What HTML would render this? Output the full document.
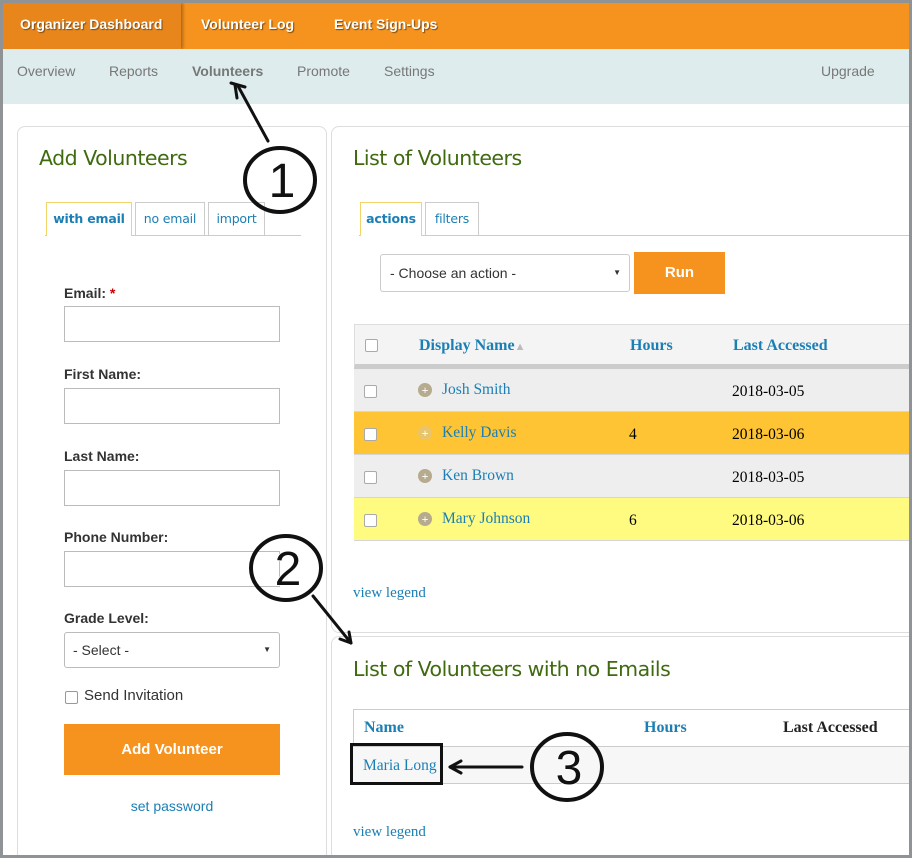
<!DOCTYPE html>
<html><head><meta charset="utf-8"><style>
*{box-sizing:border-box;margin:0;padding:0}
body{width:912px;height:858px;background:#8f9396;position:relative;overflow:hidden;font-family:"Liberation Sans",sans-serif}
.frame{position:absolute;left:3px;top:3px;width:906px;height:852px;background:#fff;overflow:hidden}
.top{position:absolute;left:0;top:0;width:906px;height:46px;background:#f6931e}
.top .t{position:absolute;top:0;height:46px;line-height:42px;color:#fff;font-weight:bold;font-size:14px;text-shadow:1px 1px 1px #7a4a10}
.top .a{left:0;width:178px;background:#e8861b;padding-left:17px;box-shadow:2px 0 3px rgba(0,0,0,.3)}
.sub{position:absolute;left:0;top:46px;width:906px;height:55px;background:#deecee}
.sub span{position:absolute;top:14px;font-size:14px;color:#777}
.panel{position:absolute;background:#fff;border:1px solid #ddd;border-radius:8px}
h2{position:absolute;font-weight:normal;font-size:20.5px;color:#3f6a10;font-family:"DejaVu Sans","Liberation Sans",sans-serif;letter-spacing:-.5px}
.tab{position:absolute;height:34px;border:1px solid #ccc;border-bottom:none;color:#1b7fb5;line-height:32px;text-align:center;font-family:"DejaVu Sans",sans-serif;font-size:12.5px;letter-spacing:-.2px}
.tab.on{border-color:#f2d56a;background:#fff}
label{position:absolute;font-size:14px;font-weight:bold;color:#333}
.in{position:absolute;width:216px;height:36px;border:1px solid #bbb;background:#fff}
.serif{font-family:"Liberation Serif",serif}
.lnk{color:#1b7fb5}
.row{position:absolute;left:22px;width:556px;height:43px;border-bottom:1px solid #d6d6d6}
.cb{position:absolute;left:10px;width:13px;height:13px;border:1px solid #aaa;border-radius:2px;background:#fff}
.plus{position:absolute;left:64px;width:14px;height:14px;border-radius:50%;background:#b6ab8e;color:#fff;font-size:12px;line-height:14px;text-align:center;font-weight:bold}
.row .n{position:absolute;left:88px;font-size:15.5px}
.row .d{position:absolute;left:378px;font-size:15.5px}
.row .h{position:absolute;left:275px;font-size:15.5px}
</style></head><body><div class="frame">
<div class="top"><div class="t a">Organizer Dashboard</div><div class="t" style="left:198px">Volunteer Log</div><div class="t" style="left:331px">Event Sign-Ups</div></div>
<div class="sub"><span style="left:14px">Overview</span><span style="left:106px">Reports</span><span style="left:189px;font-weight:bold">Volunteers</span><span style="left:294px">Promote</span><span style="left:381px">Settings</span><span style="left:818px">Upgrade</span></div>

<div class="panel" style="left:14px;top:123px;width:310px;height:740px">
<h2 style="left:21px;top:19px">Add Volunteers</h2>
<div style="position:absolute;left:27px;top:108px;width:256px;border-top:1px solid #ccc"></div>
<div class="tab on" style="left:28px;top:75px;width:86px;font-weight:bold">with email</div>
<div class="tab" style="left:117px;top:75px;width:70px">no email</div>
<div class="tab" style="left:190px;top:75px;width:57px">import</div>
<label style="left:46px;top:158px">Email: <span style="color:#c00">*</span></label><div class="in" style="left:46px;top:179px"></div>
<label style="left:46px;top:239px">First Name:</label><div class="in" style="left:46px;top:261px"></div>
<label style="left:46px;top:321px">Last Name:</label><div class="in" style="left:46px;top:343px"></div>
<label style="left:46px;top:402px">Phone Number:</label><div class="in" style="left:46px;top:424px"></div>
<label style="left:46px;top:483px">Grade Level:</label><div class="in" style="left:46px;top:505px;border-radius:3px;font-size:14px;line-height:34px;padding-left:8px;color:#333">- Select -<span style="position:absolute;right:8px;font-size:8px">▼</span></div>
<div style="position:absolute;left:47px;top:564px;width:13px;height:13px;border:1px solid #999;border-radius:2px"></div>
<div style="position:absolute;left:66px;top:560px;font-size:15px;color:#333">Send Invitation</div>
<div style="position:absolute;left:46px;top:597px;width:216px;height:51px;background:#f6931e;color:#fff;font-weight:bold;font-size:15px;text-align:center;line-height:51px">Add Volunteer</div>
<div class="lnk" style="position:absolute;left:0;width:308px;text-align:center;top:671px;font-size:14px">set password</div>
</div>

<div class="panel" style="left:328px;top:123px;width:600px;height:507px">
<h2 style="left:21px;top:19px">List of Volunteers</h2>
<div style="position:absolute;left:27px;top:108px;width:560px;border-top:1px solid #ccc"></div>
<div class="tab on" style="left:28px;top:75px;width:62px;font-weight:bold">actions</div>
<div class="tab" style="left:93px;top:75px;width:54px">filters</div>
<div style="position:absolute;left:48px;top:127px;width:250px;height:38px;border:1px solid #ccc;border-radius:3px;font-size:14px;line-height:36px;padding-left:9px;color:#333">- Choose an action -<span style="position:absolute;right:8px;font-size:8px">▼</span></div>
<div style="position:absolute;left:302px;top:125px;width:91px;height:42px;background:#f6931e;color:#fff;font-weight:bold;font-size:15px;text-align:center;line-height:42px">Run</div>
<div class="row serif" style="top:197px;height:45px;background:#f4f4f4;border:1px solid #ddd;border-bottom:5px solid #ccc">
<div class="cb" style="top:14px"></div>
<div class="lnk" style="position:absolute;left:64px;top:12px;font-weight:bold;font-size:16px">Display Name<span style="color:#bbb;font-size:11px">▲</span></div>
<div class="lnk" style="position:absolute;left:275px;top:12px;font-weight:bold;font-size:16px">Hours</div>
<div class="lnk" style="position:absolute;left:378px;top:12px;font-weight:bold;font-size:16px">Last Accessed</div></div>
<div class="row serif" style="top:242px;background:#eee"><div class="cb" style="top:16px"></div><div class="plus" style="top:14px">+</div><div class="n lnk" style="top:12px">Josh Smith</div><div class="d" style="top:14px">2018-03-05</div></div>
<div class="row serif" style="top:285px;background:#fec433"><div class="cb" style="top:16px"></div><div class="plus" style="top:14px;background:#e8c46c">+</div><div class="n lnk" style="top:12px">Kelly Davis</div><div class="h" style="top:14px">4</div><div class="d" style="top:14px">2018-03-06</div></div>
<div class="row serif" style="top:328px;background:#eee"><div class="cb" style="top:16px"></div><div class="plus" style="top:14px">+</div><div class="n lnk" style="top:12px">Ken Brown</div><div class="d" style="top:14px">2018-03-05</div></div>
<div class="row serif" style="top:371px;background:#fffb80"><div class="cb" style="top:16px"></div><div class="plus" style="top:14px">+</div><div class="n lnk" style="top:12px">Mary Johnson</div><div class="h" style="top:14px">6</div><div class="d" style="top:14px">2018-03-06</div></div>
<div class="serif lnk" style="position:absolute;left:21px;top:458px;font-size:15px">view legend</div>
</div>

<div class="panel" style="left:328px;top:633px;width:600px;height:240px">
<h2 style="left:21px;top:20px">List of Volunteers with no Emails</h2>
<div class="serif" style="position:absolute;left:21px;top:72px;width:560px;height:37px;border:1px solid #ccc;border-bottom:none;font-weight:bold;font-size:16px">
<span class="lnk" style="position:absolute;left:10px;top:9px">Name</span><span class="lnk" style="position:absolute;left:290px;top:9px">Hours</span><span style="position:absolute;left:429px;top:9px;color:#222">Last Accessed</span></div>
<div class="serif" style="position:absolute;left:21px;top:109px;width:560px;height:38px;background:#f7f7f7;border-top:1px solid #ccc;border-bottom:1px solid #ccc"><span class="lnk" style="position:absolute;left:10px;top:10px;font-size:15.5px">Maria Long</span></div>
<div style="position:absolute;left:18px;top:106px;width:93px;height:42px;border:3px solid #111"></div>
<div class="serif lnk" style="position:absolute;left:21px;top:187px;font-size:15px">view legend</div>
</div>

<svg style="position:absolute;left:0;top:0" width="906" height="852">
<g fill="none" stroke="#111" stroke-width="3" stroke-linecap="round">
<path d="M265 138 L235 83"/><path d="M228 80 L242 84 M232 82 L234 95" />
<ellipse cx="277" cy="177" rx="35" ry="32" stroke-width="4"/>
<ellipse cx="283" cy="565" rx="35" ry="32" stroke-width="4"/>
<ellipse cx="564" cy="764" rx="35" ry="33" stroke-width="4"/>
<path d="M310 593 L348 640"/><path d="M348 640 L337 636 M348 640 L346 629"/>
<path d="M519 764 L447 764"/><path d="M447 764 L458 758 M447 764 L458 770"/>
</g>
<g font-family="Liberation Sans,sans-serif" font-size="48" fill="#111" text-anchor="middle" stroke="#fff" stroke-width="1.5" paint-order="stroke">
<text x="279" y="194">1</text><text x="285" y="582">2</text><text x="566" y="781">3</text></g>
</svg>
</div></body></html>
